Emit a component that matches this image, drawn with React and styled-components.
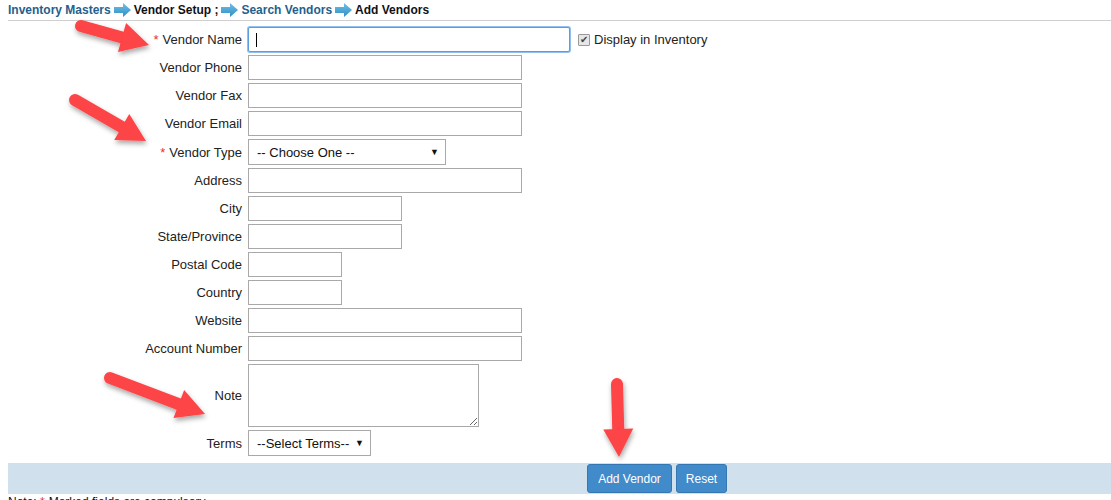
import React from "react";
import styled, { createGlobalStyle } from "styled-components";

const GlobalStyle = createGlobalStyle`
  html, body {
    margin: 0;
    padding: 0;
    background: #fff;
    font-family: "Liberation Sans", Arial, sans-serif;
    overflow: hidden;
  }
`;

const Page = styled.div`
  position: relative;
  padding-left: 8px;
  width: 1103px;
  height: 500px;
`;

const Breadcrumb = styled.div`
  display: flex;
  align-items: center;
  height: 20px;
  border-bottom: 1px solid #cfcfcf;
  font-size: 12px;
  font-weight: bold;
  color: #111;
`;

const Crumb = styled.span`
  color: ${(p) => (p.link ? "#245f8e" : "#111")};
  white-space: nowrap;
`;

const CrumbArrow = styled.svg`
  width: 17px;
  height: 14px;
  margin: 0 3px 0 3px;
  flex: none;
`;

const Form = styled.div`
  display: grid;
  grid-template-columns: 234px auto;
  column-gap: 6px;
  row-gap: 3px;
  margin-top: 6px;
  align-items: center;
`;

const Label = styled.div`
  text-align: right;
  font-size: 13px;
  color: #222;
  white-space: nowrap;
`;

const Star = styled.span`
  color: #e8302f;
  margin-right: 4px;
`;

const Field = styled.div`
  display: flex;
  align-items: center;
  position: relative;
`;

const TextInput = styled.input`
  box-sizing: border-box;
  width: ${(p) => p.w}px;
  height: 25px;
  border: 1px solid ${(p) => (p.focused ? "#5a9de0" : "#a9a9a9")};
  box-shadow: ${(p) => (p.focused ? "0 0 0 1px #8fc0ef" : "none")};
  border-radius: ${(p) => (p.focused ? "2px" : "0")};
  padding: 2px 6px;
  font-family: "Liberation Sans", Arial, sans-serif;
  font-size: 13px;
  outline: none;
  background: #fff;
`;

const Caret = styled.span`
  position: absolute;
  left: 8px;
  top: 6px;
  width: 1px;
  height: 14px;
  background: #000;
`;

const CheckWrap = styled.label`
  display: flex;
  align-items: center;
  margin-left: 8px;
  font-size: 13px;
  color: #222;
`;

const CheckBox = styled.span`
  box-sizing: border-box;
  width: 12px;
  height: 12px;
  border: 1px solid #9a9a9a;
  background: #e6e6e6;
  border-radius: 1px;
  margin-right: 4px;
  display: flex;
  align-items: center;
  justify-content: center;
  font-size: 10px;
  line-height: 1;
  color: #444;
`;

const Select = styled.div`
  box-sizing: border-box;
  width: ${(p) => p.w}px;
  height: 26px;
  border: 1px solid #a9a9a9;
  display: flex;
  align-items: center;
  justify-content: space-between;
  padding: 0 6px 0 8px;
  font-size: 13px;
  color: #111;
  background: #fff;
`;

const Caret2 = styled.span`
  font-size: 9px;
  color: #111;
`;

const NoteArea = styled.textarea`
  box-sizing: border-box;
  width: 231px;
  height: 63px;
  border: 1px solid #a9a9a9;
  font-family: "Liberation Sans", Arial, sans-serif;
  font-size: 13px;
  outline: none;
  margin: 0;
  display: block;
`;

const ActionBar = styled.div`
  display: flex;
  gap: 4px;
  align-items: center;
  margin-top: 7px;
  width: 1103px;
  height: 31px;
  background: #d0e0ec;
  padding-left: 579px;
  box-sizing: border-box;
`;

const Button = styled.button`
  height: 29px;
  width: ${(p) => p.w}px;
  border: 1px solid #3577b3;
  border-radius: 3px;
  background: #428bca;
  color: #fff;
  font-family: "Liberation Sans", Arial, sans-serif;
  font-size: 12px;
  padding: 0;
`;

const FootNote = styled.div`
  font-size: 12px;
  color: #111;
  margin-top: 1px;
`;

const Overlay = styled.svg`
  position: absolute;
  left: 0;
  top: 0;
  width: 1111px;
  height: 500px;
  pointer-events: none;
`;

const arrowPts = (x1, y1, x2, y2, headLen = 28, headW = 30) => {
  const dx = x2 - x1;
  const dy = y2 - y1;
  const len = Math.hypot(dx, dy);
  const ux = dx / len;
  const uy = dy / len;
  const bx = x2 - ux * headLen;
  const by = y2 - uy * headLen;
  const px = -uy;
  const py = ux;
  return {
    shaftEnd: [bx + ux * 2, by + uy * 2],
    head: `${x2},${y2} ${bx + px * headW / 2},${by + py * headW / 2} ${bx - px * headW / 2},${by - py * headW / 2}`,
  };
};

const RedArrow = ({ from, to }) => {
  const a = arrowPts(from[0], from[1], to[0], to[1]);
  return (
    <g filter="url(#shadow)">
      <line
        x1={from[0]}
        y1={from[1]}
        x2={a.shaftEnd[0]}
        y2={a.shaftEnd[1]}
        stroke="#fd4446"
        strokeWidth="12"
        strokeLinecap="round"
      />
      <polygon points={a.head} fill="#fd4446" />
    </g>
  );
};

const BlueArrow = () => (
  <CrumbArrow viewBox="0 0 17 14">
    <defs>
      <linearGradient id="ba" x1="0" y1="0" x2="0" y2="1">
        <stop offset="0" stopColor="#6fc0e6" />
        <stop offset="1" stopColor="#2f8fc4" />
      </linearGradient>
    </defs>
    <path d="M0 4 H9 V0 L17 7 L9 14 V10 H0 Z" fill="url(#ba)" />
  </CrumbArrow>
);

const rows = [
  { label: "Vendor Phone", w: 274 },
  { label: "Vendor Fax", w: 274 },
  { label: "Vendor Email", w: 274 },
];

const rows2 = [
  { label: "Address", w: 274 },
  { label: "City", w: 154 },
  { label: "State/Province", w: 154 },
  { label: "Postal Code", w: 94 },
  { label: "Country", w: 94 },
  { label: "Website", w: 274 },
  { label: "Account Number", w: 274 },
];

export default function App() {
  return (
    <Page>
      <GlobalStyle />
      <Breadcrumb>
        <Crumb link>Inventory Masters</Crumb>
        <BlueArrow />
        <Crumb>Vendor Setup ;</Crumb>
        <BlueArrow />
        <Crumb link>Search Vendors</Crumb>
        <BlueArrow />
        <Crumb>Add Vendors</Crumb>
      </Breadcrumb>

      <Form>
        <Label>
          <Star>*</Star>Vendor Name
        </Label>
        <Field>
          <TextInput w={322} focused />
          <Caret />
          <CheckWrap>
            <CheckBox>✔</CheckBox>
            Display in Inventory
          </CheckWrap>
        </Field>

        {rows.map((r) => (
          <React.Fragment key={r.label}>
            <Label>{r.label}</Label>
            <Field>
              <TextInput w={r.w} />
            </Field>
          </React.Fragment>
        ))}

        <Label>
          <Star>*</Star>Vendor Type
        </Label>
        <Field>
          <Select w={198}>
            <span>-- Choose One --</span>
            <Caret2>▼</Caret2>
          </Select>
        </Field>

        {rows2.map((r) => (
          <React.Fragment key={r.label}>
            <Label>{r.label}</Label>
            <Field>
              <TextInput w={r.w} />
            </Field>
          </React.Fragment>
        ))}

        <Label>Note</Label>
        <Field>
          <NoteArea />
        </Field>

        <Label>Terms</Label>
        <Field>
          <Select w={123}>
            <span>--Select Terms--</span>
            <Caret2>▼</Caret2>
          </Select>
        </Field>
      </Form>

      <ActionBar>
        <Button w={85}>Add Vendor</Button>
        <Button w={51}>Reset</Button>
      </ActionBar>
      <FootNote>
        Note: <Star>*</Star>Marked fields are compulsory.
      </FootNote>

      <Overlay>
        <defs>
          <filter id="shadow" x="-30%" y="-30%" width="160%" height="160%">
            <feDropShadow dx="1" dy="3" stdDeviation="2.5" floodColor="#000" floodOpacity="0.35" />
          </filter>
        </defs>
        <RedArrow from={[81, 26]} to={[149, 45]} />
        <RedArrow from={[75, 100]} to={[146, 141]} />
        <RedArrow from={[110, 378]} to={[205, 414]} />
        <RedArrow from={[617, 384]} to={[619, 457]} />
      </Overlay>
    </Page>
  );
}
